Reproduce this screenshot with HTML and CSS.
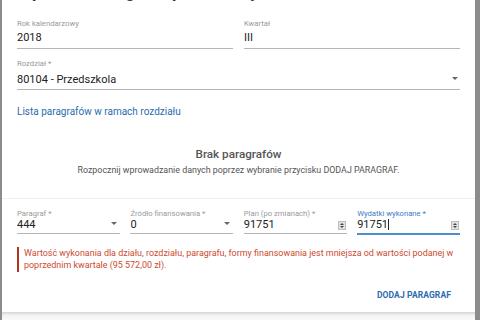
FILE: index.html
```html
<!DOCTYPE html>
<html lang="pl">
<head>
<meta charset="utf-8">
<link rel="stylesheet" href="styles.css">
</head>
<body>
<div class="dialog">
  <div class="content">
    <h2 class="title">Wydatki szczegółowy kwartalny</h2>
    <div class="row2">
      <div class="field">
        <div class="label">Rok kalendarzowy</div>
        <div class="value">2018</div>
      </div>
      <div class="field">
        <div class="label">Kwartał</div>
        <div class="value">III</div>
      </div>
    </div>
    <div class="field select wide">
      <div class="label">Rozdział *</div>
      <div class="value">80104 - Przedszkola</div>
      <span class="arrow"></span>
    </div>
    <a class="link">Lista paragrafów w ramach rozdziału</a>
    <div class="empty">
      <div class="empty-title">Brak paragrafów</div>
      <div class="empty-text">Rozpocznij wprowadzanie danych poprzez wybranie przycisku DODAJ PARAGRAF.</div>
    </div>
  </div>
  <div class="card">
    <div class="row4">
      <div class="field small select">
        <div class="label">Paragraf *</div>
        <div class="value">444</div>
        <span class="arrow"></span>
      </div>
      <div class="field small select">
        <div class="label">Źródło finansowania *</div>
        <div class="value">0</div>
        <span class="arrow"></span>
      </div>
      <div class="field small number">
        <div class="label">Plan (po zmianach) *</div>
        <div class="value">91751</div>
        <span class="spin"><i class="up"></i><i class="down"></i></span>
      </div>
      <div class="field small number focused">
        <div class="label">Wydatki wykonane *</div>
        <div class="value">91751<span class="caret"></span></div>
        <span class="spin"><i class="up"></i><i class="down"></i></span>
      </div>
    </div>
    <div class="error">Wartość wykonania dla działu, rozdziału, paragrafu, formy finansowania jest mniejsza od wartości podanej w poprzednim kwartale (95 572,00 zł).</div>
    <div class="actions"><span class="btn">DODAJ PARAGRAF</span></div>
  </div>
  <div class="next"></div>
</div>
</body>
</html>
```

FILE: styles.css
```css
* { box-sizing: border-box; }
html, body { margin: 0; padding: 0; }
body {
  width: 480px;
  height: 320px;
  overflow: hidden;
  background: #8c8c8c;
  font-family: Roboto, "Liberation Sans", sans-serif;
  color: #222;
}
.dialog {
  margin-left: 2px;
  width: 473px;
  height: 320px;
  background: #fff;
  overflow: hidden;
  display: flex;
  flex-direction: column;
}
.content {
  padding: 0 15px;
}
.title {
  margin: -16px 0 0 0;
  height: 17px;
  font-size: 17px;
  font-weight: 500;
  line-height: 17px;
  color: #333;
  white-space: nowrap;
}
.row2 {
  display: grid;
  grid-template-columns: 1fr 1fr;
  column-gap: 11px;
  margin-top: 14px;
}
.field {
  position: relative;
  border-bottom: 1px solid #b5b5b5;
}
.label {
  font-size: 7.7px;
  line-height: 10px;
  height: 10px;
  color: #9a9a9a;
  margin-top: 4px;
  white-space: nowrap;
}
.value {
  font-size: 11px;
  line-height: 13px;
  height: 13px;
  margin: 2px 0 4px 0;
  color: #222;
}
.wide .label { margin-top: 10px; }
.wide .value { margin: 4px 0 3px 0; }
.arrow {
  position: absolute;
  right: 3px;
  bottom: 8px;
  width: 0;
  height: 0;
  border-left: 3px solid transparent;
  border-right: 3px solid transparent;
  border-top: 3px solid #666;
}
.wide .arrow { right: 2px; bottom: 9px; }
.link {
  display: block;
  margin-top: 15px;
  height: 13px;
  font-size: 10px;
  line-height: 13px;
  color: #2b6cad;
}
.empty {
  text-align: center;
  padding-top: 28px;
  height: 80px;
}
.empty-title {
  font-size: 11.7px;
  font-weight: 500;
  color: #555;
  line-height: 16px;
}
.empty-text {
  margin-top: 3px;
  font-size: 8.9px;
  line-height: 11px;
  color: #555;
}
.card {
  border-top: 1px solid #f0f0f0;
  padding: 0 15px;
  height: 114px;
}
.row4 {
  display: grid;
  grid-template-columns: repeat(4, 1fr);
  column-gap: 10.5px;
  margin-top: 6px;
  align-items: start;
}
.small .value { margin: 0 0 3px 0; line-height: 11px; height: 11px; }
.focused { border-bottom: 2px solid #4a8fd0; }
.focused .label { color: #3a7cc4; }
.caret {
  display: inline-block;
  width: 1px;
  height: 11px;
  background: #222;
  vertical-align: -2px;
}
.spin {
  position: absolute;
  right: 1px;
  bottom: 3px;
  width: 8px;
  height: 9px;
  background: #e2e2e2;
  border: 1px solid #bdbdbd;
}
.spin i {
  position: absolute;
  left: 1px;
  width: 0;
  height: 0;
  border-left: 2px solid transparent;
  border-right: 2px solid transparent;
}
.spin .up { top: 1px; border-bottom: 2px solid #444; }
.spin .down { bottom: 1px; border-top: 2px solid #444; }
.error {
  margin-top: 12px;
  border-left: 2px solid #b5321f;
  padding: 1px 0 1px 5px;
  font-size: 8.95px;
  line-height: 11.5px;
  color: #cc4a2e;
}
.actions {
  display: flex;
  justify-content: flex-end;
  margin-top: 18px;
  padding-right: 9px;
}
.btn {
  font-size: 8.5px;
  line-height: 11px;
  font-weight: 700;
  color: #2b6cad;
  letter-spacing: 0.1px;
}
.next {
  height: 8px;
  background: linear-gradient(#d4d4d4, #f2f2f2 40%, #fafafa);
}
```
